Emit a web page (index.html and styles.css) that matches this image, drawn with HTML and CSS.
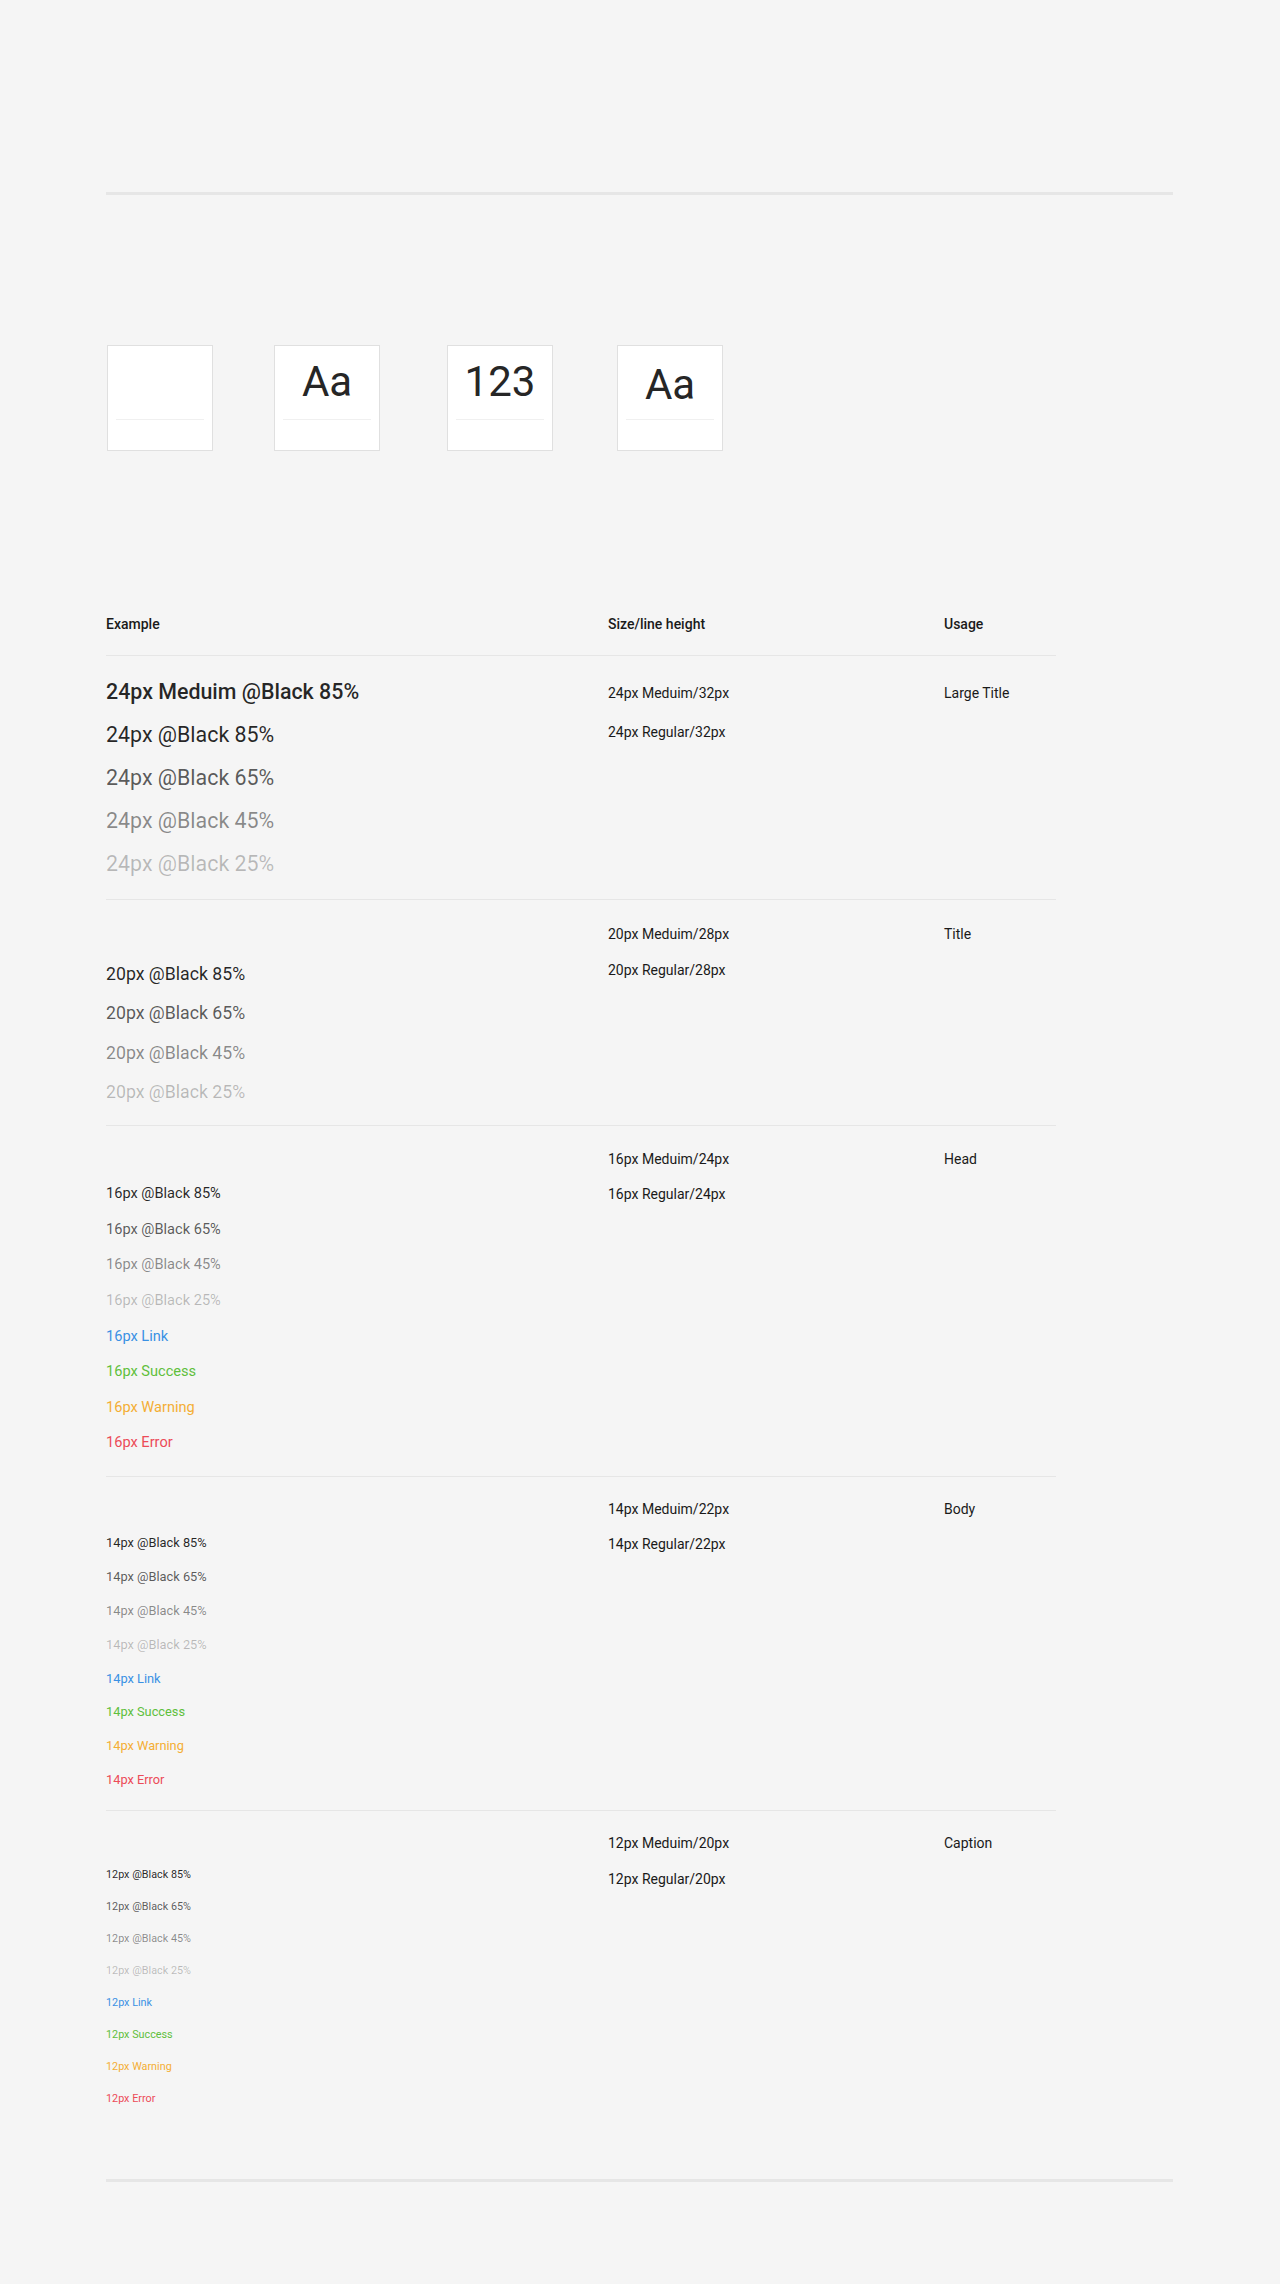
FILE: index.html
```html
<!DOCTYPE html>
<html lang="en">

<head>
    <title>Typography</title>

    <link rel="stylesheet" href="styles.css">

</head>

<body>

    <div class="page">

        <div class="rule"></div>

        <div class="samples">
            <div class="sample"><span class="glyph"></span></div>
            <div class="sample"><span class="glyph">Aa</span></div>
            <div class="sample"><span class="glyph">123</span></div>
            <div class="sample"><span class="glyph low">Aa</span></div>
        </div>

        <div class="table">

            <div class="row head">
                <div class="col example">Example</div>
                <div class="col size">Size/line height</div>
                <div class="col usage">Usage</div>
            </div>

            <!-- 24px -->
            <div class="row s24">
                <div class="col example">
                    <p class="medium black-85">24px Meduim @Black 85%</p>
                    <p class="black-85">24px @Black 85%</p>
                    <p class="black-65">24px @Black 65%</p>
                    <p class="black-45">24px @Black 45%</p>
                    <p class="black-25">24px @Black 25%</p>
                </div>
                <div class="col size">
                    <p>24px Meduim/32px</p>
                    <p>24px Regular/32px</p>
                </div>
                <div class="col usage">
                    <p>Large Title</p>
                </div>
            </div>

            <!-- 20px -->
            <div class="row s20">
                <div class="col example">
                    <p class="black-85">20px @Black 85%</p>
                    <p class="black-65">20px @Black 65%</p>
                    <p class="black-45">20px @Black 45%</p>
                    <p class="black-25">20px @Black 25%</p>
                </div>
                <div class="col size">
                    <p>20px Meduim/28px</p>
                    <p>20px Regular/28px</p>
                </div>
                <div class="col usage">
                    <p>Title</p>
                </div>
            </div>

            <!-- 16px -->
            <div class="row s16">
                <div class="col example">
                    <p class="black-85">16px @Black 85%</p>
                    <p class="black-65">16px @Black 65%</p>
                    <p class="black-45">16px @Black 45%</p>
                    <p class="black-25">16px @Black 25%</p>
                    <p class="link">16px Link</p>
                    <p class="success">16px Success</p>
                    <p class="warning">16px Warning</p>
                    <p class="error">16px Error</p>
                </div>
                <div class="col size">
                    <p>16px Meduim/24px</p>
                    <p>16px Regular/24px</p>
                </div>
                <div class="col usage">
                    <p>Head</p>
                </div>
            </div>

            <!-- 14px -->
            <div class="row s14">
                <div class="col example">
                    <p class="black-85">14px @Black 85%</p>
                    <p class="black-65">14px @Black 65%</p>
                    <p class="black-45">14px @Black 45%</p>
                    <p class="black-25">14px @Black 25%</p>
                    <p class="link">14px Link</p>
                    <p class="success">14px Success</p>
                    <p class="warning">14px Warning</p>
                    <p class="error">14px Error</p>
                </div>
                <div class="col size">
                    <p>14px Meduim/22px</p>
                    <p>14px Regular/22px</p>
                </div>
                <div class="col usage">
                    <p>Body</p>
                </div>
            </div>

            <!-- 12px -->
            <div class="row s12">
                <div class="col example">
                    <p class="black-85">12px @Black 85%</p>
                    <p class="black-65">12px @Black 65%</p>
                    <p class="black-45">12px @Black 45%</p>
                    <p class="black-25">12px @Black 25%</p>
                    <p class="link">12px Link</p>
                    <p class="success">12px Success</p>
                    <p class="warning">12px Warning</p>
                    <p class="error">12px Error</p>
                </div>
                <div class="col size">
                    <p>12px Meduim/20px</p>
                    <p>12px Regular/20px</p>
                </div>
                <div class="col usage">
                    <p>Caption</p>
                </div>
            </div>

        </div>

        <div class="rule bottom"></div>

    </div>

</body>

</html>
```

FILE: styles.css
```css
* {
    padding: 0;
    margin: 0;
    box-sizing: border-box;
}

body {
    background: #f5f5f5;
    font-family: Roboto, "Liberation Sans", sans-serif;
    color: #1f1f1f;
}

.page {
    width: 1067px;
    margin-left: 106px;
    padding-top: 192px;
    padding-bottom: 102px;
}

.rule {
    height: 3px;
    background: #e6e6e6;
}

.rule.bottom {
    margin-top: 64px;
}

/* sample tiles */

.samples {
    display: flex;
    gap: 64px;
    margin-top: 150px;
    padding-left: 1px;
}

.sample {
    width: 106px;
    height: 106px;
    background: #fff;
    border: 1px solid #e0e0e0;
    display: flex;
    flex-direction: column;
    align-items: center;
    padding: 0 8px;
}

.sample:nth-child(2) {
    margin-left: -3px;
    margin-right: 3px;
}

.glyph {
    display: block;
    width: 100%;
    height: 74px;
    border-bottom: 1px solid #f0f0f0;
    text-align: center;
    font-size: 42px;
    line-height: 72px;
    color: #262626;
}

.glyph.low {
    line-height: 78px;
}

/* table */

.table {
    width: 950px;
    margin-top: 150px;
}

.row {
    display: flex;
    border-bottom: 1px solid #e6e6e6;
}

.row:last-child {
    border-bottom: none;
}

.col.example {
    width: 502px;
}

.col.size {
    width: 336px;
}

.col.usage {
    flex-grow: 1;
}

.head {
    font-size: 14px;
    font-weight: 500;
    line-height: 20px;
    padding: 13px 0 21px;
    color: #1a1a1a;
}

.size p,
.usage p {
    font-size: 14px;
    color: #1a1a1a;
}

.medium {
    font-weight: 500;
}

.black-85 { color: rgba(0, 0, 0, 0.85); }
.black-65 { color: rgba(0, 0, 0, 0.65); }
.black-45 { color: rgba(0, 0, 0, 0.45); }
.black-25 { color: rgba(0, 0, 0, 0.25); }
.link { color: #3a91e4; }
.success { color: #5fbf3c; }
.warning { color: #f4ae34; }
.error { color: #ec4b58; }

/* 24px */
.s24 .example { padding: 14px 0 14px; }
.s24 .example p { font-size: 21.4px; line-height: 43px; }
.s24 .size,
.s24 .usage { padding-top: 18px; }
.s24 .size p,
.s24 .usage p { line-height: 39px; }

/* 20px */
.s20 .example { padding: 55px 0 13px; }
.s20 .example p { font-size: 17.7px; line-height: 39.3px; }
.s20 .size,
.s20 .usage { padding-top: 16px; }
.s20 .size p,
.s20 .usage p { line-height: 36px; }

/* 16px */
.s16 .example { padding: 50px 0 15px; }
.s16 .example p { font-size: 14.6px; line-height: 35.6px; }
.s16 .size,
.s16 .usage { padding-top: 16px; }
.s16 .size p,
.s16 .usage p { line-height: 35px; }

/* 14px */
.s14 .example { padding: 49px 0 13px; }
.s14 .example p { font-size: 12.8px; line-height: 33.9px; }
.s14 .size,
.s14 .usage { padding-top: 15px; }
.s14 .size p,
.s14 .usage p { line-height: 35px; }

/* 12px */
.s12 .example { padding: 48px 0 0; }
.s12 .example p { font-size: 10.8px; line-height: 32px; }
.s12 .size,
.s12 .usage { padding-top: 14px; }
.s12 .size p,
.s12 .usage p { line-height: 36px; }
```
